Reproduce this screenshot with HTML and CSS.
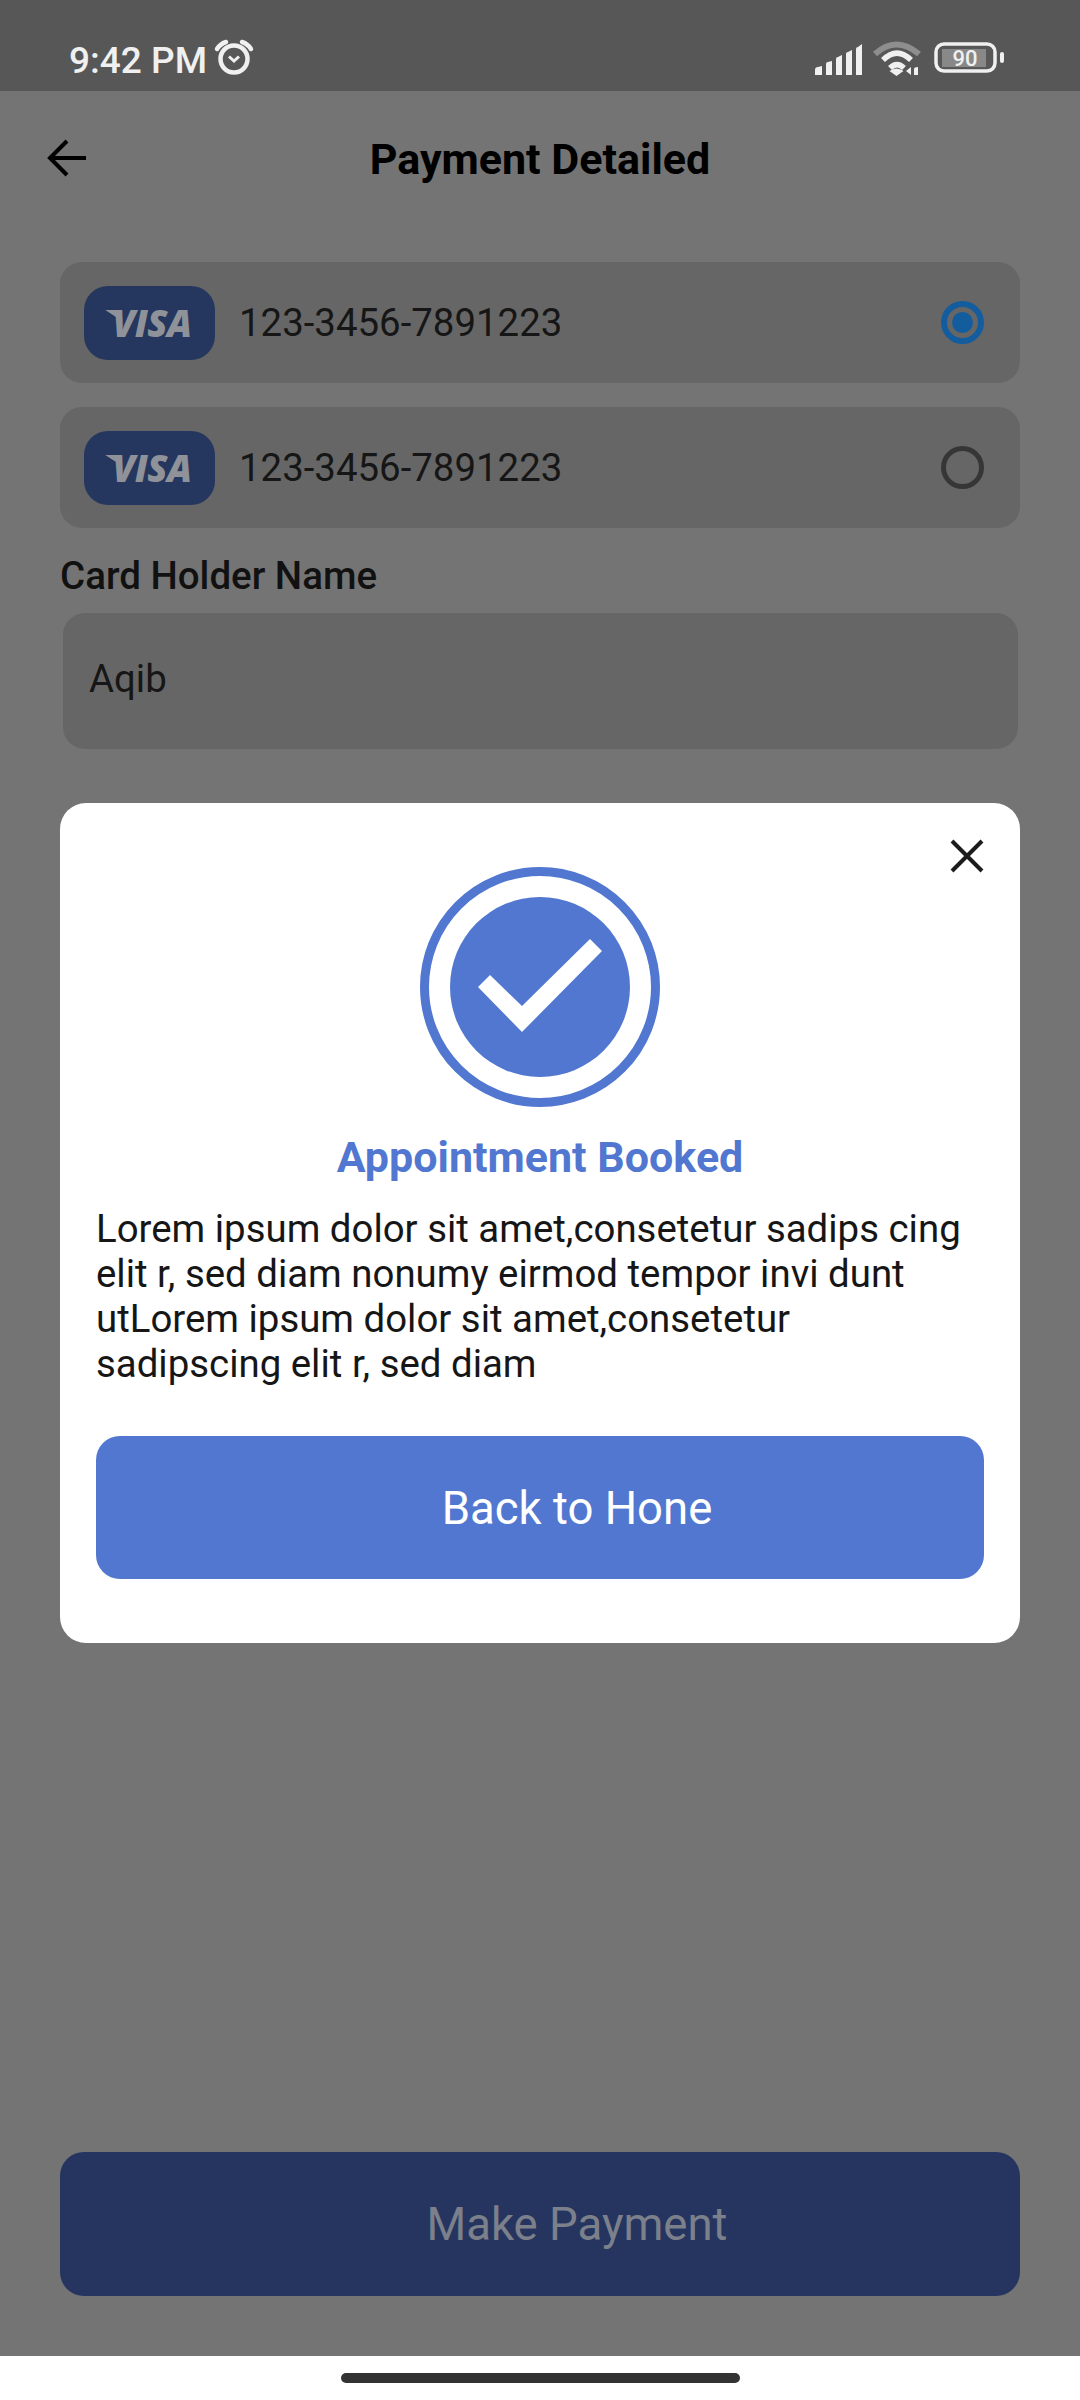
FILE: index.html
```html
<!DOCTYPE html>
<html lang="en">
<head>
  <meta charset="UTF-8" />
  <title>Payment Detailed</title>
  <meta name="viewport" content="width=device-width, initial-scale=1.0" />
  <link rel="stylesheet" href="styles.css">
</head>
<body>

  <div class="page">

    <div class="status-bar">
      <span class="status-time">9:42 PM</span>
      <svg class="alarm-icon" viewBox="0 0 44 40" fill="none" stroke="#f0f0f0" stroke-width="4.500">
        <circle cx="22" cy="22" r="13.500" />
        <path d="M5 12 Q8 7 14 5" stroke-linecap="round" />
        <path d="M30 5 Q36 7 39 12" stroke-linecap="round" />
        <path d="M17 19.500 L22 24 L27 19.500" stroke-width="3" />
      </svg>
      <div class="status-right">
        <svg class="signal-icon" viewBox="0 0 50 32" fill="#f0f0f0">
          <path d="M0 31 V26 Q0 23 3 23 L7 22 V31 Z" />
          <path d="M11 31 V20 Q11 18 13 18 L17 17 V31 Z" />
          <path d="M21 31 V15 Q21 13 23 13 L27 11 V31 Z" />
          <path d="M31 31 V10 Q31 8 33 8 L37 6 V31 Z" />
          <path d="M41 31 V5 Q41 3 43 3 L47 0 V31 Z" />
        </svg>
        <svg class="wifi-icon" viewBox="0 0 52 40" fill="none" stroke="#f0f0f0" stroke-width="5.500">
          <path d="M4 16 Q25 -3 48 16" stroke="#8e8e8e" stroke-width="6" />
          <path d="M12 22 Q26 8 40 22" />
          <path d="M19 30 Q26 23 33 30" />
          <path d="M25.500 38 L18.500 33 Q25.500 28 32.500 33 Z" fill="#f0f0f0" stroke="none" />
          <path d="M35 33 L40 29 V37 Z" fill="#f0f0f0" stroke="none" />
          <path d="M43 37 V31 Q43 29 47 29 V37 Z" fill="#f0f0f0" stroke="none" />
        </svg>
        <svg class="battery-icon" viewBox="0 0 72 32">
          <rect x="2" y="2" width="59" height="27" rx="8" fill="none" stroke="#f0f0f0" stroke-width="3.500" />
          <rect x="8" y="7" width="44" height="18" fill="#888888" />
          <rect x="66" y="10" width="4" height="11" rx="2" fill="#f0f0f0" />
          <text x="31" y="24" text-anchor="middle" class="battery-text">90</text>
        </svg>
      </div>
    </div>

    <div class="top-bar">
      <svg class="back-icon" viewBox="0 0 40 38" fill="none" stroke="#000" stroke-width="4">
        <path d="M20 2 L3 19 L20 36" />
        <path d="M3 19 H39" />
      </svg>
      <h1>Payment Detailed</h1>
    </div>

    <div class="content">
      <div class="card-row">
        <div class="visa-badge"><span class="visa-text">VISA</span></div>
        <span class="card-number">123-3456-7891223</span>
        <span class="radio selected"><span class="radio-dot"></span></span>
      </div>

      <div class="card-row">
        <div class="visa-badge"><span class="visa-text">VISA</span></div>
        <span class="card-number">123-3456-7891223</span>
        <span class="radio"></span>
      </div>

      <div class="field-label">Card Holder Name</div>
      <div class="field-input">Aqib</div>
    </div>

    <button class="btn pay-btn">Make Payment</button>

    <div class="nav-bar"><span class="nav-pill"></span></div>

    <div class="modal">
      <svg class="close-icon" viewBox="0 0 34 34" fill="none" stroke="#1c1c1c" stroke-width="4">
        <path d="M2 2 L32 32 M32 2 L2 32" />
      </svg>
      <svg class="check-icon" viewBox="0 0 240 240">
        <circle cx="120" cy="120" r="115.500" fill="none" stroke="#5177d0" stroke-width="9" />
        <circle cx="120" cy="120" r="90" fill="#5177d0" />
        <path d="M170 72 L182 84 L102 165 L58 120 L70 108 L102 139 Z" fill="#fff" />
      </svg>
      <h2>Appointment Booked</h2>
      <p>Lorem ipsum dolor sit amet,consetetur sadips cing elit r, sed diam nonumy eirmod tempor invi dunt utLorem ipsum dolor sit amet,consetetur sadipscing elit r, sed diam</p>
      <button class="btn home-btn">Back to Hone</button>
    </div>

  </div>

</body>
</html>
```

FILE: styles.css
```css
body {
  margin: 0;
  font-family: Roboto, "Liberation Sans", sans-serif;
  background: #747474;
}

.page {
  position: relative;
  display: flex;
  flex-direction: column;
  width: 1080px;
  height: 2400px;
  overflow: hidden;
  background: #747474;
}

/* status bar */
.status-bar {
  display: flex;
  align-items: center;
  box-sizing: border-box;
  height: 91px;
  padding: 27px 74px 0 69px;
  background: #575757;
  color: #f0f0f0;
}

.status-time {
  margin-top: 2px;
  font-size: 37px;
  font-weight: 500;
}

.alarm-icon {
  width: 44px;
  height: 40px;
  margin-left: 5px;
  margin-top: -4px;
}

.status-right {
  display: flex;
  align-items: center;
  margin-left: auto;
}

.signal-icon {
  width: 50px;
  height: 32px;
  margin-top: 2px;
}

.wifi-icon {
  width: 52px;
  height: 40px;
  margin-left: 6px;
  margin-top: -3px;
}

.battery-icon {
  width: 72px;
  height: 32px;
  margin-left: 11px;
  margin-top: -2px;
}

.battery-text {
  font-size: 22px;
  font-weight: 500;
  fill: #f0f0f0;
}

/* top bar */
.top-bar {
  display: flex;
  align-items: center;
  justify-content: center;
  position: relative;
  height: 136px;
}

.top-bar h1 {
  margin: 0;
  font-size: 43px;
  font-weight: 700;
  color: #000;
}

.back-icon {
  position: absolute;
  left: 47px;
  top: 48px;
  width: 40px;
  height: 38px;
}

/* cards and form */
.content {
  flex: 1;
  padding: 35px 60px 0;
}

.card-row {
  display: flex;
  align-items: center;
  height: 121px;
  margin-bottom: 24px;
  padding: 0 36px 0 24px;
  background: #666666;
  border-radius: 22px;
}

.visa-badge {
  display: flex;
  align-items: center;
  justify-content: center;
  width: 131px;
  height: 74px;
  background: #25375f;
  border-radius: 24px;
}

.visa-text {
  position: relative;
  padding-left: 5px;
  font-family: "Open Sans", Roboto, sans-serif;
  font-size: 37px;
  font-weight: 800;
  font-style: italic;
  letter-spacing: -0.500px;
  line-height: 44px;
  color: #8f9299;
}

/* flick on the V of the logo */
.visa-text::before {
  content: "";
  position: absolute;
  left: -3px;
  top: 9px;
  width: 14px;
  height: 9px;
  background: #8f9299;
  clip-path: polygon(0 0, 100% 0, 100% 100%);
}

.card-number {
  margin-left: 24px;
  padding-bottom: 1px;
  font-size: 38.400px;
  color: #161616;
}

.radio {
  display: flex;
  align-items: center;
  justify-content: center;
  box-sizing: border-box;
  width: 43px;
  height: 43px;
  margin-left: auto;
  border: 5px solid #363636;
  border-radius: 50%;
}

.radio.selected {
  border: 6px solid #135d9e;
}

.radio-dot {
  width: 21px;
  height: 21px;
  background: #135d9e;
  border-radius: 50%;
}

.field-label {
  margin-top: -1px;
  font-size: 38.500px;
  font-weight: 500;
  line-height: 50px;
  color: #111;
}

.field-input {
  display: flex;
  align-items: center;
  box-sizing: border-box;
  height: 136px;
  margin: 12px 2px 0 3px;
  padding: 0 0 5px 26px;
  background: #666666;
  border-radius: 22px;
  font-size: 38.400px;
  color: #161616;
}

/* buttons */
.btn {
  display: block;
  box-sizing: border-box;
  height: 143px;
  padding: 0 0 0 74px;
  border: none;
  border-radius: 24px;
  font-family: Roboto, "Liberation Sans", sans-serif;
  font-size: 45.500px;
}

.pay-btn {
  flex: none;
  width: 960px;
  height: 144px;
  margin: 0 60px 60px;
  background: #25355f;
  color: #7c808b;
}

.home-btn {
  width: 888px;
  margin-top: 50px;
  padding-top: 2px;
  background: #5177d0;
  color: #fff;
}

/* gesture bar */
.nav-bar {
  display: flex;
  justify-content: center;
  flex: none;
  height: 44px;
  background: #fff;
}

.nav-pill {
  width: 399px;
  height: 10px;
  margin-top: 17px;
  background: #333;
  border-radius: 5px;
}

/* dialog on top of the dimmed page */
.modal {
  position: absolute;
  left: 60px;
  top: 803px;
  box-sizing: border-box;
  width: 960px;
  height: 840px;
  padding: 64px 36px 0;
  background: #fff;
  border-radius: 26px;
}

.close-icon {
  position: absolute;
  right: 36px;
  top: 36px;
  width: 34px;
  height: 34px;
}

.check-icon {
  display: block;
  width: 240px;
  height: 240px;
  margin: 0 auto;
}

.modal h2 {
  margin: 25px 0 0;
  font-size: 43px;
  font-weight: 700;
  line-height: 50px;
  text-align: center;
  color: #5177d0;
}

.modal p {
  margin: 24px 0 0;
  font-size: 38.400px;
  line-height: 45px;
  color: #161616;
}
```
